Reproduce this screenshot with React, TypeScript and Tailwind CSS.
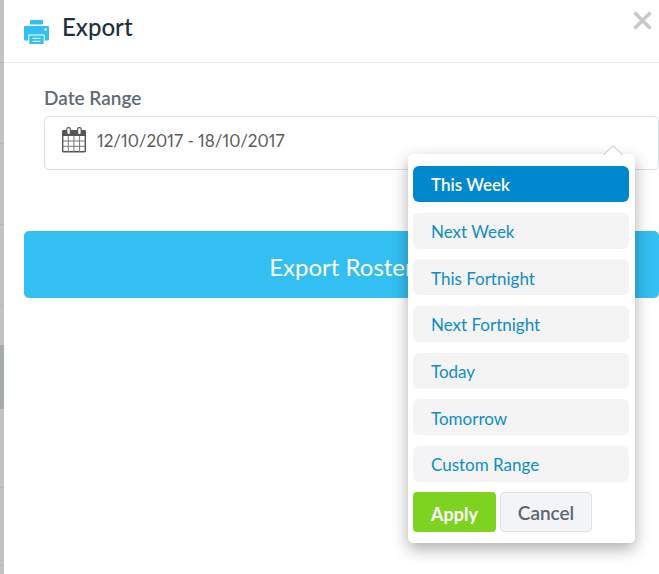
import { useState } from "react";
import { clsx } from "clsx";

const RANGES = [
  "This Week",
  "Next Week",
  "This Fortnight",
  "Next Fortnight",
  "Today",
  "Tomorrow",
  "Custom Range",
];

function PrinterIcon() {
  return (
    <svg width="25" height="24" viewBox="0 0 25 24" aria-hidden="true">
      <rect x="6" y="0" width="13" height="4.500" rx="1" fill="#33bff1" />
      <path
        d="M1 6h23a1 1 0 0 1 1 1v12.500a1 1 0 0 1-1 1h-3.300V14.500H4.300v6H1a1 1 0 0 1-1-1V7a1 1 0 0 1 1-1z"
        fill="#33bff1"
      />
      <circle cx="21.500" cy="9.500" r="1.200" fill="#fff" />
      <rect x="5.300" y="15.500" width="14.400" height="8.500" fill="#33bff1" />
      <path d="M8.500 18.300h8M8.500 21.300h8" stroke="#fff" strokeWidth="1" />
    </svg>
  );
}

function CalendarIcon() {
  return (
    <svg width="24" height="26" viewBox="0 0 24 26" aria-hidden="true">
      <path d="M1.500 3h21A1.500 1.500 0 0 1 24 4.500V9H0V4.500A1.500 1.500 0 0 1 1.500 3z" fill="#555" />
      <rect x="0.700" y="4" width="22.600" height="20.800" rx="1" fill="none" stroke="#555" strokeWidth="1.400" />
      <path d="M6.300 9v16M11.900 9v16M17.600 9v16M1 14h22M1 19.300h22" stroke="#777" strokeWidth="1" />
      <rect x="4.800" y="0.700" width="3.600" height="7" rx="1.600" fill="#fff" stroke="#555" strokeWidth="1.200" />
      <rect x="15.600" y="0.700" width="3.600" height="7" rx="1.600" fill="#fff" stroke="#555" strokeWidth="1.200" />
    </svg>
  );
}

// Sliver of the dimmed roster that stays visible beside the panel
function RosterEdge() {
  return (
    <div className="flex w-1 shrink-0 flex-col bg-[#c3c2c1]">
      <div className="h-[63px] border-b border-[#b3b3b3]" />
      <div className="h-[81px] border-b border-[#b8b8b8]" />
      <div className="h-[81px] border-b border-[#b8b8b8]" />
      <div className="h-[81px] border-b border-[#b8b8b8]" />
      <div className="h-[39px]" />
      <div className="h-16 bg-[#a6abad]" />
      <div className="h-[79px] border-b border-[#b8b8b8]" />
      <div className="h-[78px] border-b border-[#b8b8b8]" />
    </div>
  );
}

function RangeMenu({ onClose }: { onClose: () => void }) {
  const [selected, setSelected] = useState(RANGES[0]);

  return (
    <div className="absolute top-[38px] right-6 z-10 w-[227px] rounded-[5px] bg-white pt-3 pr-[6px] pb-[11px] pl-[5px] shadow-[0_6px_16px_rgba(0,0,0,0.32)]">
      <svg className="absolute -top-[9px] right-3" width="20" height="10" viewBox="0 0 20 10" aria-hidden="true">
        <path d="M0.500 10 10 0.700 19.500 10" fill="#fff" stroke="#bbb" />
      </svg>
      <ul className="flex h-[316px] flex-col justify-between">
        {RANGES.map((range) => (
          <li key={range}>
            <button
              type="button"
              onClick={() => setSelected(range)}
              className={clsx(
                "block h-9 w-full rounded-md px-[18px] pt-[2px] text-left text-[17px]",
                range === selected
                  ? "bg-[#0088cc] font-semibold text-white"
                  : "bg-[#f4f4f4] text-[#0e8ccd]",
              )}
            >
              {range}
            </button>
          </li>
        ))}
      </ul>
      <div className="mt-[10px] flex gap-1">
        <button
          type="button"
          onClick={onClose}
          className="h-10 w-[83px] rounded-[4px] bg-[#7ed321] pt-1 text-[18px] font-bold text-white"
        >
          Apply
        </button>
        <button
          type="button"
          onClick={onClose}
          className="h-10 w-[92px] rounded-[4px] border border-[#dfe3e8] bg-[#f3f4f7] pt-[2px] text-[19px] font-semibold text-[#5b6770]"
        >
          Cancel
        </button>
      </div>
    </div>
  );
}

export default function App() {
  const [open, setOpen] = useState(true);

  return (
    <div className="flex min-h-screen bg-white font-['Lato',sans-serif]">
      <RosterEdge />
      <main className="min-w-0 flex-1">
        <header className="flex h-[63px] items-start border-b border-[#e4edef] pr-[6px] pl-5">
          <div className="pt-5">
            <PrinterIcon />
          </div>
          <h1 className="ml-[13px] pt-[11px] text-[24px] leading-8 font-medium text-[#1f303d]">Export</h1>
          <button type="button" aria-label="Close" className="ml-auto pt-[10px]">
            <svg width="21" height="21" viewBox="0 0 21 21" aria-hidden="true">
              <path d="M2.500 2.500 18.500 18.500M18.500 2.500 2.500 18.500" stroke="#c8c8c8" strokeWidth="3.600" />
            </svg>
          </button>
        </header>

        <div className="pt-[23px] pl-10">
          <label htmlFor="range" className="block h-[30px] text-[19px] leading-6 font-semibold text-[#5f6b75]">
            Date Range
          </label>
          <div className="relative">
            <div className="flex h-[54px] items-center rounded-[5px] border border-[#d6dfe1] pr-4 pb-[6px] pl-[17px]">
              <CalendarIcon />
              <input
                id="range"
                readOnly
                value="12/10/2017 - 18/10/2017"
                onClick={() => setOpen(true)}
                className="ml-[11px] min-w-0 flex-1 bg-transparent pt-[2px] text-[17px] text-[#5c5c5c] proportional-nums outline-none"
              />
            </div>
            {open ? <RangeMenu onClose={() => setOpen(false)} /> : null}
          </div>
        </div>

        <div className="mt-[61px] pl-5">
          <button
            type="button"
            className="h-[67px] w-full rounded-[5px] bg-[#33bff1] pt-1 text-[24px] text-white"
          >
            Export Roster
          </button>
        </div>
      </main>
    </div>
  );
}
